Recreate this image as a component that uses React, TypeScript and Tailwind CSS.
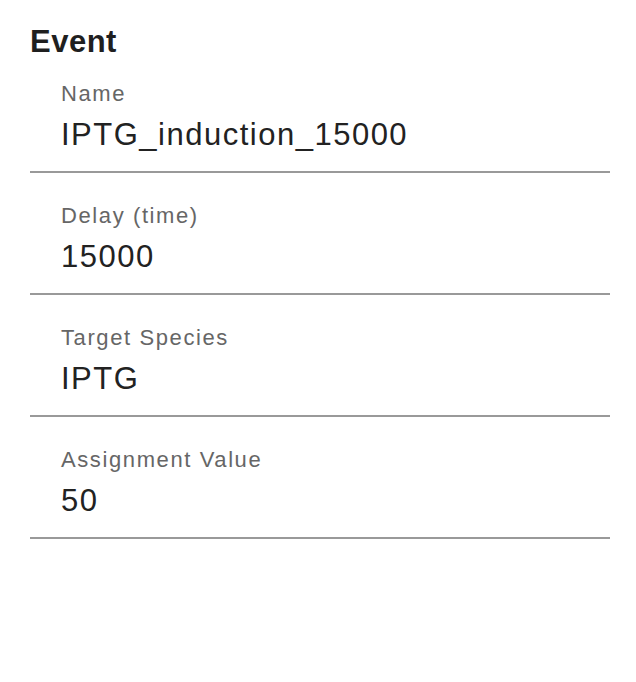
import React from "react";

const fields = [
  { label: "Name", value: "IPTG_induction_15000" },
  { label: "Delay (time)", value: "15000" },
  { label: "Target Species", value: "IPTG" },
  { label: "Assignment Value", value: "50" },
];

export default function App() {
  return (
    <div
      className="w-[636px] h-[682px] bg-white pl-[30px] pr-[26px] pt-[24px]"
      style={{ fontFamily: '"Liberation Sans", Arial, Helvetica, sans-serif' }}
    >
      <h2 className="text-[31px] leading-[36px] font-bold tracking-[0.5px] text-[#1f1f1f]">Event</h2>
      {fields.map((f, i) => (
        <div
          key={f.label}
          className={`${i === 0 ? "pt-[21px]" : "pt-[30px]"} pb-[18px] pl-[31px] border-b-2 border-[#999999] flex flex-col gap-[10px]`}
        >
          <div className="text-[22px] leading-[26px] tracking-[1.6px] text-[#666666]">{f.label}</div>
          <div className="text-[31px] leading-[36px] tracking-[1.5px] text-[#222222]">{f.value}</div>
        </div>
      ))}
    </div>
  );
}
